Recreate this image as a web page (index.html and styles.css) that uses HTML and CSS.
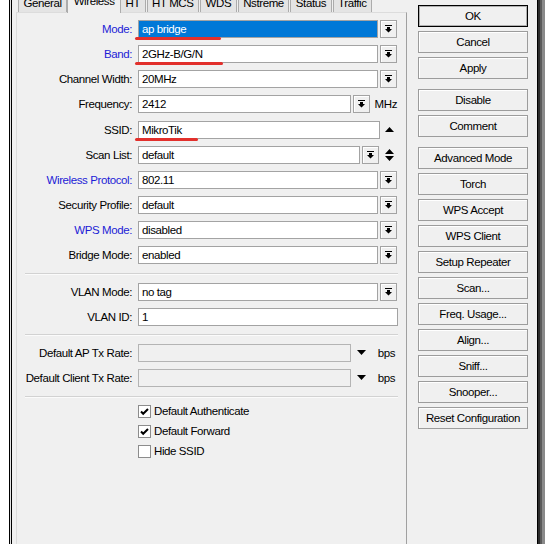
FILE: index.html
```html
<!DOCTYPE html>
<html lang="en">

<head>
  <meta charset="UTF-8">
  <meta name="viewport" content="width=device-width, initial-scale=1.0">
  <title>Interface wlan1</title>
  <link rel="stylesheet" href="styles.css">
</head>

<body>
  <div class="window">
    <div class="edge"></div>

    <div class="main">
      <div class="tabs">
        <div class="tab">General</div>
        <div class="tab active">Wireless</div>
        <div class="tab">HT</div>
        <div class="tab">HT MCS</div>
        <div class="tab">WDS</div>
        <div class="tab">Nstreme</div>
        <div class="tab">Status</div>
        <div class="tab">Traffic</div>
      </div>

      <div class="panel">
        <div class="row">
          <div class="label blue">Mode:</div>
          <div class="field">
            <div class="input selected">ap bridge</div>
            <div class="drop"><svg width="7" height="8" viewBox="0 0 7 8"><rect width="7" height="1"/><path d="M2 2h3v2h2L3.5 7.5 0 4h2z"/></svg></div>
            <span class="mark mark-mode"></span>
          </div>
        </div>
        <div class="row">
          <div class="label blue">Band:</div>
          <div class="field">
            <div class="input">2GHz-B/G/N</div>
            <div class="drop"><svg width="7" height="8" viewBox="0 0 7 8"><rect width="7" height="1"/><path d="M2 2h3v2h2L3.5 7.5 0 4h2z"/></svg></div>
            <span class="mark mark-band"></span>
          </div>
        </div>
        <div class="row">
          <div class="label">Channel Width:</div>
          <div class="field">
            <div class="input">20MHz</div>
            <div class="drop"><svg width="7" height="8" viewBox="0 0 7 8"><rect width="7" height="1"/><path d="M2 2h3v2h2L3.5 7.5 0 4h2z"/></svg></div>
          </div>
        </div>
        <div class="row">
          <div class="label">Frequency:</div>
          <div class="field">
            <div class="input">2412</div>
            <div class="drop"><svg width="7" height="8" viewBox="0 0 7 8"><rect width="7" height="1"/><path d="M2 2h3v2h2L3.5 7.5 0 4h2z"/></svg></div>
            <span class="unit unit-mhz">MHz</span>
          </div>
        </div>
        <div class="row row-ssid">
          <div class="label">SSID:</div>
          <div class="field">
            <div class="input">MikroTik</div>
            <div class="arrows"><svg width="9" height="5" viewBox="0 0 9 5"><path d="M0 5L4.5 0 9 5z"/></svg></div>
            <span class="mark mark-ssid"></span>
          </div>
        </div>
        <div class="row">
          <div class="label">Scan List:</div>
          <div class="field">
            <div class="input">default</div>
            <div class="drop"><svg width="7" height="8" viewBox="0 0 7 8"><rect width="7" height="1"/><path d="M2 2h3v2h2L3.5 7.5 0 4h2z"/></svg></div>
            <div class="arrows"><svg width="9" height="12" viewBox="0 0 9 12"><path d="M0 5L4.5 0 9 5zM0 7h9l-4.5 5z"/></svg></div>
          </div>
        </div>
        <div class="row">
          <div class="label blue">Wireless Protocol:</div>
          <div class="field">
            <div class="input">802.11</div>
            <div class="drop"><svg width="7" height="8" viewBox="0 0 7 8"><rect width="7" height="1"/><path d="M2 2h3v2h2L3.5 7.5 0 4h2z"/></svg></div>
          </div>
        </div>
        <div class="row">
          <div class="label">Security Profile:</div>
          <div class="field">
            <div class="input">default</div>
            <div class="drop"><svg width="7" height="8" viewBox="0 0 7 8"><rect width="7" height="1"/><path d="M2 2h3v2h2L3.5 7.5 0 4h2z"/></svg></div>
          </div>
        </div>
        <div class="row">
          <div class="label blue">WPS Mode:</div>
          <div class="field">
            <div class="input">disabled</div>
            <div class="drop"><svg width="7" height="8" viewBox="0 0 7 8"><rect width="7" height="1"/><path d="M2 2h3v2h2L3.5 7.5 0 4h2z"/></svg></div>
          </div>
        </div>
        <div class="row">
          <div class="label">Bridge Mode:</div>
          <div class="field">
            <div class="input">enabled</div>
            <div class="drop"><svg width="7" height="8" viewBox="0 0 7 8"><rect width="7" height="1"/><path d="M2 2h3v2h2L3.5 7.5 0 4h2z"/></svg></div>
          </div>
        </div>

        <div class="sep sep-1"></div>

        <div class="row">
          <div class="label">VLAN Mode:</div>
          <div class="field">
            <div class="input">no tag</div>
            <div class="drop"><svg width="7" height="8" viewBox="0 0 7 8"><rect width="7" height="1"/><path d="M2 2h3v2h2L3.5 7.5 0 4h2z"/></svg></div>
          </div>
        </div>
        <div class="row">
          <div class="label">VLAN ID:</div>
          <div class="field">
            <div class="input">1</div>
          </div>
        </div>

        <div class="sep sep-2"></div>

        <div class="row">
          <div class="label">Default AP Tx Rate:</div>
          <div class="field">
            <div class="input off"></div>
            <div class="tri"><svg width="9" height="5" viewBox="0 0 9 5"><path d="M0 0h9L4.5 5z"/></svg></div>
            <span class="unit">bps</span>
          </div>
        </div>
        <div class="row">
          <div class="label">Default Client Tx Rate:</div>
          <div class="field">
            <div class="input off"></div>
            <div class="tri"><svg width="9" height="5" viewBox="0 0 9 5"><path d="M0 0h9L4.5 5z"/></svg></div>
            <span class="unit">bps</span>
          </div>
        </div>

        <div class="sep sep-3"></div>

        <div class="check">
          <span class="box"><svg width="11" height="11" viewBox="0 0 11 11"><path d="M2 5.5l2.2 2.3L9 3" fill="none" stroke="#000" stroke-width="2"/></svg></span>
          Default Authenticate
        </div>
        <div class="check">
          <span class="box"><svg width="11" height="11" viewBox="0 0 11 11"><path d="M2 5.5l2.2 2.3L9 3" fill="none" stroke="#000" stroke-width="2"/></svg></span>
          Default Forward
        </div>
        <div class="check">
          <span class="box"></span>
          Hide SSID
        </div>
      </div>
    </div>

    <div class="side">
      <div class="btn default">OK</div>
      <div class="btn">Cancel</div>
      <div class="btn">Apply</div>

      <div class="btn group">Disable</div>
      <div class="btn">Comment</div>

      <div class="btn group">Advanced Mode</div>
      <div class="btn">Torch</div>
      <div class="btn">WPS Accept</div>
      <div class="btn">WPS Client</div>
      <div class="btn">Setup Repeater</div>
      <div class="btn">Scan...</div>
      <div class="btn">Freq. Usage...</div>
      <div class="btn">Align...</div>
      <div class="btn">Sniff...</div>
      <div class="btn">Snooper...</div>
      <div class="btn">Reset Configuration</div>
    </div>

    <div class="shadow"></div>
  </div>
</body>

</html>
```

FILE: styles.css
```css
* {
  box-sizing: border-box;
}

body {
  margin: 0;
  background: #fff;
  font-family: "Liberation Sans", Arial, sans-serif;
  font-size: 11.5px;
  letter-spacing: -0.4px;
  color: #000;
}

.window {
  display: flex;
  height: 544px;
  overflow: hidden;
  background: #f0f0f0;
}

.edge {
  width: 12px;
  flex-shrink: 0;
  background: linear-gradient(to right, #fff 0 9px, #000 9px 10px, #e4e4e4 10px 11px, #000 11px 12px);
}

.main {
  display: flex;
  flex-direction: column;
  flex-shrink: 0;
  width: 395px;
  padding-left: 4px;
}

/* tab strip, cut off at the top of the shot */
.tabs {
  display: flex;
  align-items: flex-end;
  height: 12px;
  padding-left: 2px;
}

.tab {
  height: 22px;
  padding: 0 4.5px 2px;
  display: flex;
  align-items: flex-end;
  line-height: 13px;
  background: #e4e4e4;
  border: 1px solid #acacac;
  border-bottom: none;
  margin-right: 1px;
}

.tab.active {
  position: relative;
  z-index: 1;
  height: 25px;
  margin: 0 -1px -1px -1px;
  padding: 0 5.5px 5px;
  background: #f0f0f0;
}

.panel {
  flex: 1;
  padding: 3px 8px 0;
  background: #f0f0f0;
  border-top: 1px solid #dcdcdc;
  border-left: 1px solid #dcdcdc;
  border-right: 1px solid #a0a0a0;
}

.row {
  display: flex;
  align-items: center;
  height: 25px;
}

.row-ssid {
  margin-top: 1px;
}

.label {
  width: 107px;
  margin-right: 6px;
  flex-shrink: 0;
  text-align: right;
  white-space: nowrap;
}

.blue {
  color: #1c1cd6;
}

.field {
  position: relative;
  display: flex;
  align-items: center;
  width: 260px;
}

.input {
  flex: 1;
  height: 18px;
  padding-left: 3px;
  line-height: 16px;
  background: #fff;
  border: 1px solid #a3a3a3;
  white-space: nowrap;
}

.input.selected {
  background: #0078d7;
  color: #fff;
}

.input.off {
  flex: 0 0 213px;
  background: #f0f0f0;
  border-color: #b4b4b4;
}

.drop {
  display: flex;
  align-items: center;
  justify-content: center;
  width: 17px;
  height: 18px;
  margin-left: 2px;
  margin-right: 1px;
  background: #f0f0f0;
  border: 1px solid #a3a3a3;
  box-shadow: inset 1px 1px #fff;
}

.arrows {
  display: flex;
  align-items: center;
  justify-content: center;
  width: 18px;
}

.tri {
  display: flex;
  justify-content: center;
  width: 20px;
  margin-left: 1px;
}

.unit {
  margin-left: 6px;
  margin-right: 3px;
}

.unit-mhz {
  margin-left: 4px;
  margin-right: 1px;
}

/* red hand-drawn underlines */
.mark {
  position: absolute;
  top: 17px;
  left: -3px;
  height: 3px;
  background: #e2302c;
  border-radius: 2px;
}

.mark-mode {
  width: 86px;
}

.mark-band {
  width: 88px;
}

.mark-ssid {
  width: 63px;
}

.sep {
  border-top: 1px solid #d2d2d2;
  border-bottom: 1px solid #fbfbfb;
}

.sep-1 {
  margin: 6px 0 4px;
}

.sep-2 {
  margin: 5px 0 4px;
}

.sep-3 {
  margin: 6px 0 3px;
}

.check {
  display: flex;
  align-items: center;
  height: 20px;
  padding-left: 113px;
}

.box {
  display: flex;
  align-items: center;
  justify-content: center;
  width: 13px;
  height: 13px;
  margin-right: 3px;
  background: #fff;
  border: 1px solid #8c8c8c;
}

.side {
  width: 130px;
  flex-shrink: 0;
  padding: 5px 9px 0 11px;
}

.btn {
  height: 22px;
  margin-bottom: 4px;
  line-height: 20px;
  text-align: center;
  background: #f0f0f0;
  border: 1px solid #9c9c9c;
  box-shadow: inset 1px 1px #fff;
  white-space: nowrap;
}

.btn.default {
  border-color: #000;
  box-shadow: inset 0 0 0 1px #b0b0b0;
}

/* margins collapse with the 4px below the previous button */
.btn.group {
  margin-top: 10px;
}

.shadow {
  flex: 1;
  background: linear-gradient(to right, #000 0 1px, #2c2c2c 1px 3px, #5a5a5a 3px 5px, #8a8a8a 5px);
}
```
